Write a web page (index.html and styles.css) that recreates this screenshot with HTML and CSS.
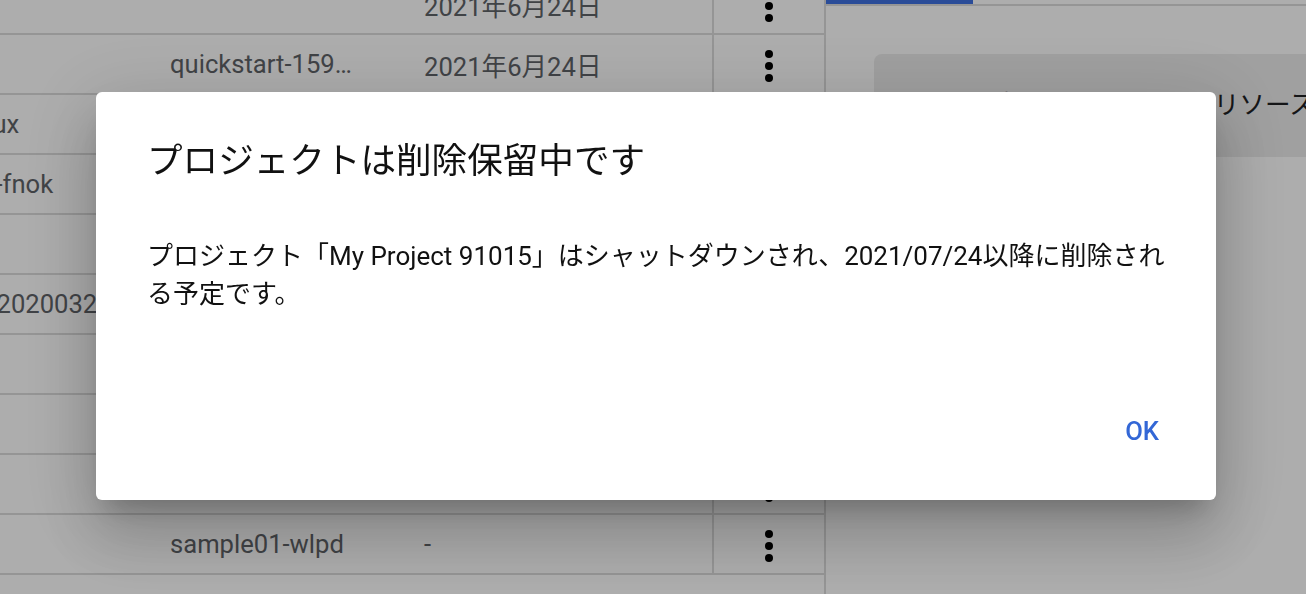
FILE: index.html
```html
<!DOCTYPE html>
<html lang="ja">
<head>
  <meta charset="UTF-8">
  <title>プロジェクト</title>
  <link rel="stylesheet" href="styles.css">
</head>
<body>
  <div class="page">
    <!-- Project list (scrolled) -->
    <div class="list">
      <div class="row">
        <div class="cell name"></div>
        <div class="cell id"></div>
        <div class="cell date">2021年6月24日</div>
        <div class="cell menu"><svg class="kebab" viewBox="0 0 24 24"><circle cx="12" cy="6" r="2"/><circle cx="12" cy="12" r="2"/><circle cx="12" cy="18" r="2"/></svg></div>
      </div>
      <div class="row">
        <div class="cell name"></div>
        <div class="cell id">quickstart-1594320788</div>
        <div class="cell date">2021年6月24日</div>
        <div class="cell menu"><svg class="kebab" viewBox="0 0 24 24"><circle cx="12" cy="6" r="2"/><circle cx="12" cy="12" r="2"/><circle cx="12" cy="18" r="2"/></svg></div>
      </div>
      <div class="row">
        <div class="cell name">sample-linux</div>
        <div class="cell id"></div>
        <div class="cell date"></div>
        <div class="cell menu"></div>
      </div>
      <div class="row">
        <div class="cell name">my-project-fnok</div>
        <div class="cell id"></div>
        <div class="cell date"></div>
        <div class="cell menu"></div>
      </div>
      <div class="row">
        <div class="cell name"></div>
        <div class="cell id"></div>
        <div class="cell date"></div>
        <div class="cell menu"></div>
      </div>
      <div class="row">
        <div class="cell name">quickstart-20200321</div>
        <div class="cell id"></div>
        <div class="cell date"></div>
        <div class="cell menu"></div>
      </div>
      <div class="row">
        <div class="cell name"></div>
        <div class="cell id"></div>
        <div class="cell date"></div>
        <div class="cell menu"></div>
      </div>
      <div class="row">
        <div class="cell name"></div>
        <div class="cell id"></div>
        <div class="cell date"></div>
        <div class="cell menu"></div>
      </div>
      <div class="row">
        <div class="cell name"></div>
        <div class="cell id"></div>
        <div class="cell date"></div>
        <div class="cell menu"><svg class="kebab" viewBox="0 0 24 24"><circle cx="12" cy="6" r="2"/><circle cx="12" cy="12" r="2"/><circle cx="12" cy="18" r="2"/></svg></div>
      </div>
      <div class="row">
        <div class="cell name"></div>
        <div class="cell id">sample01-wlpd</div>
        <div class="cell date">-</div>
        <div class="cell menu"><svg class="kebab" viewBox="0 0 24 24"><circle cx="12" cy="6" r="2"/><circle cx="12" cy="12" r="2"/><circle cx="12" cy="18" r="2"/></svg></div>
      </div>
      <div class="list-footer"></div>
    </div>

    <!-- Side panel -->
    <aside class="side">
      <div class="tabs"><div class="tab-indicator"></div></div>
      <div class="notice">このプロジェクトとそのリソースは削除保留中です</div>
    </aside>
  </div>

  <!-- Modal dialog -->
  <div class="scrim">
    <div class="dialog">
      <h2 class="dialog-title">プロジェクトは削除保留中です</h2>
      <div class="dialog-body">プロジェクト「My Project 91015」はシャットダウンされ、2021/07/24以降に削除される予定です。</div>
      <div class="dialog-actions">
        <button class="btn-text">OK</button>
      </div>
    </div>
  </div>
</body>
</html>
```

FILE: styles.css
```css
:root {
  --line: #dcdcdc;
  --text-grey: #5f6368;
  --text-dark: #202124;
  --blue: #3367d6;
}

html, body {
  margin: 0;
  padding: 0;
  height: 100%;
  overflow: hidden;
  background: #fff;
  font-family: 'Roboto', 'Noto Sans CJK JP', sans-serif;
}

.page {
  display: flex;
  height: 100vh;
}

/* Project list */
.list {
  flex: none;
  width: 971px;
  margin-left: -145px;
  margin-top: -25px;
  border-right: 2px solid var(--line);
  box-sizing: border-box;
}

.row {
  display: grid;
  grid-template-columns: 295px 254px 308px 1fr;
  height: 60px;
  box-sizing: border-box;
  border-bottom: 2px solid var(--line);
}

.cell {
  display: flex;
  align-items: center;
  padding-left: 20px;
  font-size: 25.6px;
  color: var(--text-grey);
  white-space: nowrap;
  overflow: hidden;
}

.cell.id {
  display: block;
  line-height: 58px;
  padding-right: 42px;
  text-overflow: ellipsis;
}

.cell.menu {
  justify-content: center;
  padding: 4px 0 0;
  border-left: 2px solid var(--line);
}

.kebab {
  width: 48px;
  height: 48px;
  fill: #000;
}

.list-footer {
  height: 60px;
}

/* Side panel */
.side {
  flex: 1;
}

.tabs {
  height: 4px;
  border-bottom: 2px solid var(--line);
}

.tab-indicator {
  width: 147px;
  height: 4px;
  background: #3f71e0;
}

.notice {
  margin: 48px 0 0 48px;
  padding: 32px 0 33px 59px;
  background: #ececec;
  border-radius: 8px 0 0 8px;
  font-size: 25.6px;
  line-height: 38px;
  color: var(--text-dark);
  white-space: nowrap;
  overflow: hidden;
}

/* Scrim + dialog */
.scrim {
  position: fixed;
  inset: 0;
  display: flex;
  align-items: center;
  justify-content: center;
  padding: 0 0 2px 6px;
  background: rgba(0, 0, 0, 0.32);
}

.dialog {
  width: 1120px;
  height: 408px;
  box-sizing: border-box;
  display: flex;
  flex-direction: column;
  background: #fff;
  border-radius: 6px;
  box-shadow: 0 18px 24px -11px rgba(0,0,0,0.2),
              0 38px 61px 5px rgba(0,0,0,0.14),
              0 14px 74px 13px rgba(0,0,0,0.12);
}

.dialog-title {
  margin: 0;
  padding: 47px 40px 0 51px;
  font-size: 35.6px;
  font-weight: 400;
  line-height: 44px;
  color: #111;
}

.dialog-body {
  margin-top: 54px;
  padding: 0 40px 0 51px;
  font-size: 26px;
  line-height: 38px;
  color: #111;
}

.dialog-actions {
  margin-top: auto;
  display: flex;
  justify-content: flex-end;
  padding: 0 44px 40px;
}

.btn-text {
  height: 58px;
  padding: 0 13px;
  border: none;
  background: none;
  font-family: inherit;
  font-size: 25.6px;
  font-weight: 500;
  color: var(--blue);
  cursor: pointer;
}
```
